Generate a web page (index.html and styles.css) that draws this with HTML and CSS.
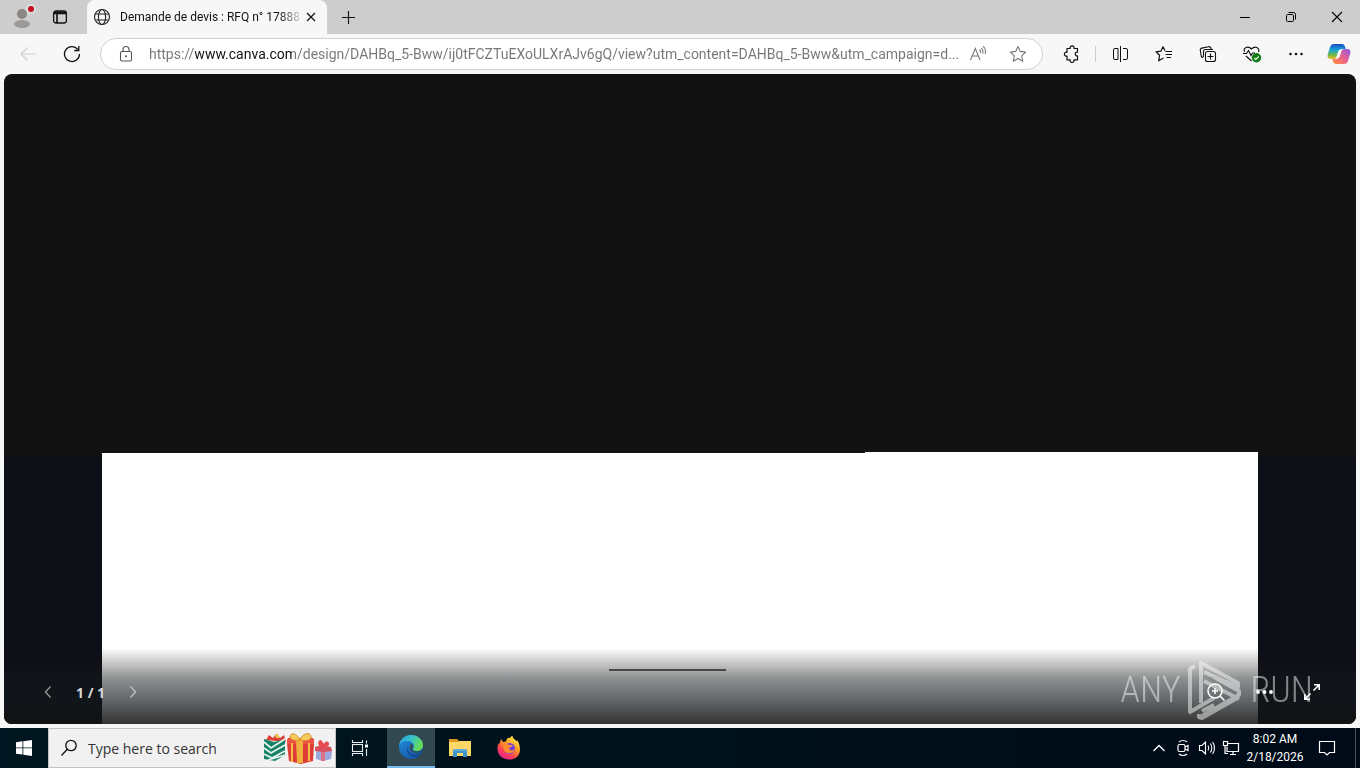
FILE: index.html
```html
<!DOCTYPE html>
<html lang="en">
<head>
<meta charset="utf-8">
<title>Demande de devis</title>
<link rel="stylesheet" href="styles.css">
</head>
<body>
<header class="tabbar">
  <button class="profile" aria-label="Profile">
    <svg width="28" height="26" viewBox="0 0 28 26"><circle cx="14" cy="10" r="5" fill="#8b8784"/><ellipse cx="14" cy="20" rx="8" ry="4" fill="#9d9996"/><circle cx="23" cy="5" r="5" fill="#ddd"/><circle cx="23" cy="5" r="3" fill="#c50f1f"/></svg>
  </button>
  <button class="tab-actions" aria-label="Tab actions">
    <svg width="16" height="16" viewBox="0 0 16 16" fill="none" stroke="#111" stroke-width="1.3"><rect x="1.6" y="2" width="12.8" height="12" rx="2.5"/><path d="M2 3.2h12M2 4.5h12M5 5v9" stroke-width="1.6"/></svg>
  </button>
  <div class="tab">
    <svg width="18" height="18" viewBox="0 0 18 18" fill="none" stroke="#222" stroke-width="1.1"><circle cx="9" cy="9" r="7.5"/><ellipse cx="9" cy="9" rx="3.6" ry="7.5"/><path d="M2.3 6h13.4M2.3 12h13.4"/></svg>
    <span class="tab-title">Demande de devis : RFQ n° 17888</span>
    <button class="tab-close" aria-label="Close tab"><svg width="10" height="10" viewBox="0 0 10 10" stroke="#111" stroke-width="1.2"><path d="M1 1l8 8M9 1l-8 8"/></svg></button>
  </div>
  <button class="new-tab" aria-label="New tab"><svg width="15" height="15" viewBox="0 0 15 15" stroke="#111" stroke-width="1.1"><path d="M7.5 1v13M1 7.5h13"/></svg></button>
  <div class="spacer"></div>
  <button class="win-btn" aria-label="Minimize"><svg width="12" height="12" viewBox="0 0 12 12" stroke="#000"><path d="M1 6.5h10"/></svg></button>
  <button class="win-btn" aria-label="Restore"><svg width="12" height="12" viewBox="0 0 12 12" fill="none" stroke="#000"><rect x="1.5" y="3.5" width="7" height="7" rx="1.2"/><path d="M3.5 1.5h5a2 2 0 0 1 2 2v5"/></svg></button>
  <button class="win-btn" aria-label="Close"><svg width="12" height="12" viewBox="0 0 12 12" stroke="#000" stroke-width="1.1"><path d="M1 1l10 10M11 1L1 11"/></svg></button>
</header>

<nav class="toolbar">
  <button class="tool" aria-label="Back" disabled><svg width="18" height="18" viewBox="0 0 18 18" fill="none" stroke="#cfcfcf" stroke-width="1.2"><path d="M17 9H2M8.500 2.500L2 9l6.500 6.500"/></svg></button>
  <button class="tool" aria-label="Refresh"><svg width="18" height="18" viewBox="0 0 18 18" fill="none" stroke="#111" stroke-width="1.3"><path d="M16.500 9A7.500 7.500 0 1 1 14.800 4.300M15.800 1v4.500h-4.500"/></svg></button>
  <div class="address">
    <svg class="lock" width="16" height="18" viewBox="0 0 16 18" fill="none" stroke="#555" stroke-width="1.1"><rect x="2.500" y="6.500" width="11" height="9.500" rx="1.5"/><path d="M5 6.500V4.500a3 3 0 0 1 6 0v2"/><circle cx="8" cy="11.300" r=".5" fill="#555"/></svg>
    <input class="url" type="text" aria-label="Address" value="https://www.canva.com/design/DAHBq_5-Bww/ij0tFCZTuEXoULXrAJv6gQ/view?utm_content=DAHBq_5-Bww&amp;utm_campaign=d...">
    <button class="addr-btn" aria-label="Read aloud"><svg width="18" height="18" viewBox="0 0 18 18" fill="none" stroke="#777" stroke-width="1.1"><path d="M1.500 15L6.300 3.500 11 15M3.200 11h6.200M10.500 4.500c1 1 1.200 2.200.8 3.500M12.300 2.800c1.600 1.500 2 3.700 1.300 5.900M14.200 1.200c2.200 2.200 2.700 5 1.800 7.700"/></svg></button>
    <button class="addr-btn" aria-label="Add to favorites"><svg width="18" height="18" viewBox="0 0 18 18" fill="none" stroke="#777" stroke-width="1.1" stroke-linejoin="round"><path d="M9 1.500l2.300 4.900 5.300.7-3.900 3.700 1 5.400L9 13.600l-4.700 2.600 1-5.400L1.400 7.100l5.300-.7z"/></svg></button>
  </div>
  <button class="tool" aria-label="Extensions"><svg width="18" height="18" viewBox="0 0 18 18" fill="none" stroke="#111" stroke-width="1.2" stroke-linejoin="round"><path d="M4 3.500h3.200a2 2 0 1 1 3.800 0h3.500v3.700a1.900 1.900 0 1 0 0 3.700v4H11a2 2 0 1 1-3.800 0H4V11a2 2 0 1 1 0-3.800z"/></svg></button>
  <span class="divider"></span>
  <button class="tool" aria-label="Split screen"><svg width="17" height="18" viewBox="0 0 17 18" fill="none" stroke="#111" stroke-width="1"><path d="M8.500 1v16M6 3.500H3a1.500 1.500 0 0 0-1.500 1.500v8A1.500 1.500 0 0 0 3 14.500h3zM11 3.500h3a1.500 1.500 0 0 1 1.500 1.500v8a1.500 1.500 0 0 1-1.500 1.500h-3"/></svg></button>
  <button class="tool" aria-label="Favorites"><svg width="18" height="18" viewBox="0 0 18 18" fill="none" stroke="#111" stroke-width="1.2" stroke-linejoin="round"><path d="M10.500 6.500H17M10.500 9.500H17M11.500 12.500H16M10 5.800L8 1.700 5.900 6.200l-4.900.6 3.600 3.400-.9 5.600L8.500 13"/></svg></button>
  <button class="tool" aria-label="Collections"><svg width="18" height="18" viewBox="0 0 18 18" fill="none" stroke="#111" stroke-width="1.1"><rect x="6.500" y="6.500" width="10" height="10" rx="2"/><path d="M11.500 8.500v6M8.500 11.500h6M4 12.500c-1 0-1.500-.5-1.800-1.500L1.300 5.200c-.2-1 .5-1.900 1.500-2.100L9.500 1.700c1-.2 2 .4 2.300 1.300l.4 1.500M4.500 12V6.500a2 2 0 0 1 2-2h7.500"/></svg></button>
  <button class="tool" aria-label="Browser essentials"><svg width="20" height="18" viewBox="0 0 20 18" fill="none" stroke="#111" stroke-width="1.1"><path d="M2.500 7C.800 3 6 .3 9.500 4 13 .3 18 3 16.500 7M1 8.500h3.500l2-3 2.500 5L10.500 8H13M4 11l5.500 5"/><circle cx="14.500" cy="12.800" r="4.700" fill="#107c10" stroke="none"/><path d="M12.200 13l1.600 1.500 3-3" stroke="#fff"/></svg></button>
  <button class="tool" aria-label="Settings and more"><svg width="18" height="18" viewBox="0 0 18 18" fill="#111"><circle cx="3.500" cy="9" r="1.300"/><circle cx="9" cy="9" r="1.300"/><circle cx="14.500" cy="9" r="1.300"/></svg></button>
  <button class="tool copilot" aria-label="Copilot"><svg width="24" height="22" viewBox="0 0 24 22"><defs><linearGradient id="ca" x1="0" y1="0" x2="0" y2="1"><stop stop-color="#1b4fc4"/><stop offset=".4" stop-color="#16a3d8"/><stop offset=".7" stop-color="#67b94b"/><stop offset="1" stop-color="#f4b92c"/></linearGradient><linearGradient id="cb" x1="1" y1="0" x2="0" y2="1"><stop stop-color="#8c5ce6"/><stop offset=".5" stop-color="#ed618d"/><stop offset="1" stop-color="#ff9436"/></linearGradient></defs><path d="M7 1h8c1.500 0 2.500 1 3 2.500l.7 2.500H15c-2 0-3 1-3.500 2.500L10 13c-.6 2-1.700 3-3.500 3H4c-3 0-4-2-3.200-5L3 4c.7-2 2-3 4-3z" fill="url(#ca)"/><path d="M17 21H9c-1.500 0-2.500-1-3-2.500L5.300 16H9c2 0 3-1 3.500-2.500L14 9c.6-2 1.700-3 3.500-3H20c3 0 4 2 3.200 5L21 18c-.7 2-2 3-4 3z" fill="url(#cb)"/><path d="M11.500 7.500h3l-2 6.500h-3z" fill="#fff"/></svg></button>
</nav>

<main class="viewer">
  <div class="backdrop"></div>
  <div class="stage"><div class="sheet"></div></div>
  <div class="controls">
    <button class="ctl" aria-label="Previous page"><svg width="14" height="14" viewBox="0 0 14 14" fill="none" stroke="#8c8e92" stroke-width="1.500"><path d="M9.500 1.500L4.500 7l5 5.500"/></svg></button>
    <span class="page-no">1 / 1</span>
    <button class="ctl" aria-label="Next page"><svg width="14" height="14" viewBox="0 0 14 14" fill="none" stroke="#bbbdbf" stroke-width="1.500"><path d="M4.500 1.500l5 5.500-5 5.500"/></svg></button>
    <div class="spacer"></div>
    <button class="ctl wide" aria-label="Zoom"><svg width="20" height="20" viewBox="0 0 20 20" fill="none" stroke="#fff" stroke-width="1.500"><circle cx="9" cy="9" r="7"/><path d="M14 14l4.500 4.500M9 6v6M6 9h6"/></svg></button>
    <button class="ctl wide" aria-label="More"><svg width="20" height="20" viewBox="0 0 20 20" fill="#fff"><circle cx="4" cy="10" r="1.900"/><circle cx="10.500" cy="10" r="1.900"/><circle cx="17" cy="10" r="1.900"/></svg></button>
    <button class="ctl wide" aria-label="Full screen"><svg width="18" height="18" viewBox="0 0 18 18" fill="none" stroke="#fff" stroke-width="1.600"><path d="M10.500 7.500L16 2M11 1.800h5.200V7M7.500 10.500L2 16M1.800 11v5.200H7"/></svg></button>
    <div class="watermark" aria-hidden="true">
      <span class="brand">ANY</span>
      <svg width="56" height="62" viewBox="0 0 56 62" fill="none" stroke="#fff" stroke-width="4" stroke-linejoin="round"><path d="M8 7L3 10v43L27 39M14 44V4l37 20v4L17 13M17 22l35 18M27 18l25 14v4L15 57M27 46l-12 6M12 55v3l3 1 37-21"/></svg>
      <span class="brand">RUN</span>
    </div>
  </div>
</main>

<footer class="taskbar">
  <button class="task" aria-label="Start"><svg width="16" height="16" viewBox="0 0 16 16" fill="#fff"><path d="M0 2.200l6.500-.9v6.200H0zM7.300 1.200L16 0v7.500H7.300zM0 8.300h6.500v6.300L0 13.700zM7.300 8.300H16V16l-8.700-1.200z"/></svg></button>
  <label class="search">
    <svg width="18" height="18" viewBox="0 0 18 18" fill="none" stroke="#111" stroke-width="1.300"><circle cx="11" cy="6.500" r="5.200"/><path d="M7.300 10.300L1.500 16.500"/></svg>
    <input type="text" placeholder="Type here to search" aria-label="Search">
    <svg width="70" height="34" viewBox="0 0 70 34"><path d="M3 9l3-5 4 3 3-4 4 4 4-3 2 7z" fill="#df3f38"/><path d="M12 4l3-1 2 4h-4z" fill="#ecc348"/><path d="M1 8l10 3 11-3v16l-10 6-11-2z" fill="#168267"/><path d="M1 11l7 6L22 8M1 17l7 5 14-8M1 23l8 4 13-7M5 29l17-5" stroke="#e8f2ec" stroke-width="1.800" fill="none"/><path d="M25 7h25l1 6-1 17-12 3-12-3-2-17z" fill="#dd3d34"/><path d="M24 8h27v5H24z" fill="#ef5044"/><path d="M33 8h7v24h-6z" fill="#f0b040"/><path d="M37 9c-3-7-10-8-10-3 0 3 6 4 10 3zM37 9c3-8 11-8 11-3 0 4-6 4-11 3z" fill="#f6c85d" stroke="#d99124"/><path d="M29 12v19M46 12v18" stroke="#f3bd4d" stroke-width="2"/><path d="M53 17h15l1 4-1 7-8 2-7-2z" fill="#9baadf"/><path d="M58 17h4v13h-4z" fill="#df7185"/><path d="M52 16l7-2 9 2 1 4-8 1-9-1z" fill="#d9505c"/><path d="M60 17c-6-1-6-8-2-8l3 4c1-4 6-3 5 1l-5 3z" fill="#e64a4e"/></svg>
  </label>
  <button class="task" aria-label="Task view"><svg width="18" height="18" viewBox="0 0 18 18" fill="none" stroke="#e8eef0" stroke-width="1.100"><path d="M1.500 1v2.500h10V1M1.500 17v-2.500h10V17M15.500 1.500v3M15.500 10v7"/><rect x="1.500" y="5.500" width="10" height="7"/><path d="M14 5.500h3v3h-3z" fill="#fff" stroke="none"/></svg></button>
  <div class="apps">
    <button class="task active" aria-label="Edge"><svg width="24" height="24" viewBox="0 0 24 24"><defs><linearGradient id="ea" x1="0" y1="0" x2="1" y2=".4"><stop stop-color="#279bd8"/><stop offset=".5" stop-color="#35c1cf"/><stop offset="1" stop-color="#65da57"/></linearGradient><linearGradient id="eb" x1="0" y1="0" x2=".6" y2="1"><stop stop-color="#2390dd"/><stop offset="1" stop-color="#1359ac"/></linearGradient></defs><circle cx="12" cy="12" r="12" fill="url(#eb)"/><path d="M0 11C1 4 6 0 12 0c7 0 12 5 12 10 0 4-3 6-6 6-3 0-4-1-4-2s1-1 1-3c0-3-3-5-7-5C4 6 1 8 0 11z" fill="url(#ea)"/><path d="M9 11c-3 5 1 11 7 11 3 0 5-2 6.500-4-2 1-4 1.500-6 1.500C11 19.500 8 16 9 11z" fill="#124b94"/><path d="M12 9c-3 3-1 8 4 9 3 .5 5-.5 6.500-1.500l1-1.500V14c-2 2-4 2.500-6 2.500-3 0-4.500-1.300-4.500-3 0-1 1-1.500 1-3 0-.8-.8-1.500-2-1.500z" fill="#354c56"/></svg></button>
    <button class="task" aria-label="File Explorer"><svg width="22" height="18" viewBox="0 0 22 18"><path d="M0 0h8l2 2h12v4H0z" fill="#dd9a22"/><path d="M0 3h9l2-1h11v15H0z" fill="#ffd766"/><path d="M4 10h14v8h-4v-4H8v4H4z" fill="#3e94cb"/><path d="M4 10h14v2H4z" fill="#61afd9"/></svg></button>
    <button class="task" aria-label="Firefox"><svg width="24" height="24" viewBox="0 0 24 24"><defs><linearGradient id="fa" x1=".8" y1="0" x2=".2" y2="1"><stop stop-color="#fff44f"/><stop offset=".4" stop-color="#ff9a25"/><stop offset=".7" stop-color="#ff4054"/><stop offset="1" stop-color="#df1c9c"/></linearGradient></defs><path d="M4 3l2 3 3-.5C9.500 3 11 1 13 2c0 0 1-2 2.500-2 0 2 2 3.500 4 5l1-.5C25 12 24 23.500 12 23.500 3 23.500-1 16 1 9l1-2v2z" fill="url(#fa)"/><circle cx="12.500" cy="12.500" r="5.500" fill="#7141da"/><path d="M5 8c3-2 5-1 7 1h4c-1 2-3 2-4 3 0 3 4 3 6 1-1 5-9 6-11 1-.5-2 0-3-2-6z" fill="#ff8b2c"/></svg></button>
  </div>
  <div class="spacer"></div>
  <button class="tray" aria-label="Show hidden icons"><svg width="14" height="14" viewBox="0 0 14 14" fill="none" stroke="#fff" stroke-width="1.300"><path d="M1.500 10L7 4.500l5.500 5.500"/></svg></button>
  <button class="tray" aria-label="Camera"><svg width="16" height="18" viewBox="0 0 16 18" fill="none" stroke="#fff" stroke-width="1.200"><rect x="3" y="5.500" width="7" height="7" rx="1.500"/><path d="M10 8l3-1.500v5L10 10M4 3c2-2 6-2 8 0M4 15c2 2 6 2 8 0"/></svg></button>
  <button class="tray" aria-label="Volume"><svg width="18" height="16" viewBox="0 0 18 16" fill="none" stroke="#fff" stroke-width="1.100"><path d="M1.500 5.500H4l3.500-3.500v12L4 10.500H1.500zM10 5.500c1 1.500 1 3.500 0 5M12.300 3.500c2 2.500 2 6.500 0 9M14.600 2c2.500 3.500 2.500 8.500 0 12"/></svg></button>
  <button class="tray" aria-label="Network"><svg width="18" height="16" viewBox="0 0 18 16" fill="none" stroke="#fff" stroke-width="1.200"><path d="M6 3.500h10.500v8H5v-5M3 6v7.500h3M8 14.500h6M11 11.500v3"/><path d="M1.500 1.500h4v4h-4z"/></svg></button>
  <button class="clock"><span>8:02 AM</span><span>2/18/2026</span></button>
  <button class="notify" aria-label="Notifications"><svg width="18" height="18" viewBox="0 0 18 18" fill="none" stroke="#fff" stroke-width="1.200"><path d="M1.500 2.500h15v11h-5l-2.500 2.500-2.500-2.500h-5z"/></svg></button>
  <button class="desktop" aria-label="Show desktop"></button>
</footer>
</body>
</html>
```
FILE: styles.css
```css
* { box-sizing: border-box; }
body {
  margin: 0;
  height: 100vh;
  display: flex;
  flex-direction: column;
  background: #f7f7f7;
  font-family: "Open Sans", "Noto Sans", sans-serif;
  color: #111;
  overflow: hidden;
}
button {
  border: 0;
  padding: 0;
  background: none;
  font: inherit;
  color: inherit;
  display: flex;
  align-items: center;
  justify-content: center;
  flex: none;
}
svg { display: block; flex: none; }
.spacer { flex: 1; }

.tabbar { display: flex; height: 34px; background: #cdcdcd; flex: none; }
.profile { width: 44px; }
.tab-actions { width: 32px; margin-right: 11px; }
.tab {
  display: flex;
  align-items: center;
  width: 240px;
  padding: 0 9px 0 6px;
  background: #f7f7f7;
  border-radius: 8px 8px 0 0;
}
.tab-title {
  flex: 1;
  margin-left: 9px;
  font-family: Roboto, "Open Sans", sans-serif;
  font-size: 12px;
  white-space: nowrap;
  mask-image: linear-gradient(to right, #000 86%, transparent);
}
.tab-close { width: 14px; height: 20px; }
.new-tab { width: 42px; }
.win-btn { width: 46px; }

.toolbar { display: flex; align-items: center; height: 40px; padding-left: 6px; flex: none; }
.tool { width: 44px; height: 32px; }
.copilot { width: 42px; }
.address {
  flex: 1;
  display: flex;
  align-items: center;
  height: 32px;
  margin: 0 7px 0 6px;
  padding: 0 4px 0 17px;
  background: #fff;
  border: 1px solid #d2d2d2;
  border-radius: 16px;
}
.url {
  flex: 1;
  min-width: 0;
  margin-left: 15px;
  padding: 0;
  border: 0;
  outline: 0;
  font-family: Roboto, "Open Sans", sans-serif;
  font-size: 14px;
  color: transparent;
  background: linear-gradient(to right, #767676 46px, #111 46px 143px, #767676 143px);
  background-clip: text;
  -webkit-background-clip: text;
}
.addr-btn { width: 40px; height: 30px; }
.divider { width: 2px; height: 16px; margin-right: 2px; border-right: 1px solid #ccc; }

.viewer {
  position: relative;
  flex: 1;
  display: flex;
  flex-direction: column;
  margin: 0 4px 4px;
  border-radius: 8px;
  background: #121212;
  overflow: hidden;
}
.backdrop { flex: 378; }
.stage {
  flex: 272;
  display: flex;
  padding: 0 98px;
  background: linear-gradient(#121212, #0e1018 8px);
}
.sheet {
  flex: 1;
  background: linear-gradient(#121212, #121212) 0 0 / 66% 1px no-repeat #fff;
}
.controls {
  position: absolute;
  inset: auto 0 0;
  height: 76px;
  display: flex;
  align-items: center;
  gap: 16px;
  padding: 12px 28px 0 32px;
  background: linear-gradient(rgba(18,18,18,0), rgba(18,18,18,.33) 28%, rgba(18,24,27,.48) 40%, rgba(18,24,27,.66) 68%, rgba(18,18,18,.86));
}
.controls::before {
  content: "";
  position: absolute;
  left: calc(50% - 71px);
  top: 21px;
  width: 117px;
  height: 2px;
  background: #484848;
}
.ctl { width: 24px; height: 32px; }
.ctl.wide { width: 32px; }
.page-no { min-width: 29px; font-size: 14px; font-weight: 700; color: #d8d9da; white-space: nowrap; }
.watermark {
  position: absolute;
  right: 43px;
  bottom: 3px;
  display: flex;
  align-items: center;
  gap: 7px;
  opacity: .48;
  pointer-events: none;
}
.brand {
  font-family: "Roboto Condensed", Roboto, sans-serif;
  font-size: 36px;
  font-weight: 300;
  line-height: 40px;
  color: #fff;
}

.taskbar {
  display: flex;
  flex: none;
  height: 40px;
  background: linear-gradient(to right, #001721, #001019 60%, #000a18);
  color: #fff;
}
.task { width: 48px; }
.search {
  display: flex;
  align-items: center;
  width: 288px;
  padding: 0 2px 0 11px;
  background: #f1f1f1;
  border: 1px solid #c4c4c4;
}
.search input {
  flex: 1;
  min-width: 0;
  margin-left: 10px;
  padding: 0;
  border: 0;
  outline: 0;
  background: none;
  font-family: inherit;
  font-size: 14px;
}
.search input::placeholder { color: #333; opacity: 1; }
.apps { display: flex; gap: 1px; margin-left: 3px; }
.active { background: #334951; border-bottom: 2px solid #76b9ed; }
.tray { width: 24px; }
.clock {
  width: 64px;
  flex-direction: column;
  font-family: Roboto, "Open Sans", sans-serif;
  font-size: 12px;
  line-height: 18px;
}
.notify { width: 40px; }
.desktop { width: 5px; margin-left: 8px; border-left: 1px solid #4a525c; }
```
